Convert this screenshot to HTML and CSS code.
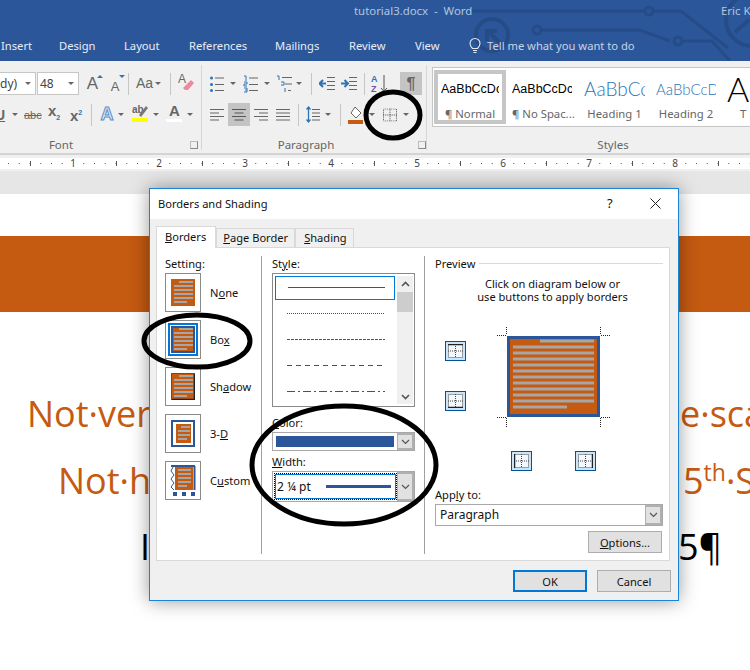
FILE: index.html
```html
<!DOCTYPE html>
<html lang="en">
<head>
  <meta charset="UTF-8">
  <title>Borders and Shading</title>
  <link rel="stylesheet" href="styles.css">
</head>
<body>
<svg class="defs" width="0" height="0">
  <defs>
    <symbol id="page" viewBox="0 0 24 27">
      <rect width="24" height="27" fill="#c55a11"/>
      <path d="M8 3h14M3 7h19M3 11h19M3 15h19M3 19h19M3 23h13" stroke="#a6a6a6" stroke-width="2" fill="none"/>
    </symbol>
    <symbol id="chev" viewBox="0 0 9 6">
      <path d="M1 1l3.5 3.5L8 1" fill="none" stroke="#555" stroke-width="1.2"/>
    </symbol>
    <symbol id="chev-up" viewBox="0 0 9 6">
      <path d="M1 5l3.5-3.5L8 5" fill="none" stroke="#555" stroke-width="1.6"/>
    </symbol>
    <symbol id="grid" viewBox="0 0 15 14">
      <path d="M.5.5h14v13H.5zM7.5 0v14M0 7h15" fill="none" stroke="#444" stroke-dasharray="1 1"/>
    </symbol>
  </defs>
</svg>

<header class="titlebar">
  <svg class="circuit" width="750" height="61" viewBox="0 0 750 61">
    <g fill="none" stroke="#264c87" stroke-width="3">
      <path d="M472 11h173M653 11h28l47 37"/>
      <circle cx="649" cy="11" r="4"/>
      <circle cx="492" cy="35" r="16" stroke-width="4"/>
      <path d="M503 46l-14-14M487 41v-10h10" stroke-width="4"/>
      <path d="M541 30h99l30 11M682 41h30l18 20"/>
      <circle cx="537" cy="30" r="4"/>
      <circle cx="678" cy="41" r="4"/>
      <circle cx="752" cy="20" r="26" stroke-width="4"/>
      <path d="M735 32l14-12" stroke-width="4"/>
    </g>
  </svg>
  <div class="title-row">
    <span class="doc-name">tutorial3.docx &nbsp;-&nbsp; Word</span>
    <span class="user">Eric K</span>
  </div>
  <nav class="tabs">
    <span class="tab tab-insert">Insert</span>
    <span class="tab tab-design">Design</span>
    <span class="tab tab-layout">Layout</span>
    <span class="tab tab-refs">References</span>
    <span class="tab tab-mail">Mailings</span>
    <span class="tab tab-review">Review</span>
    <span class="tab tab-view">View</span>
    <svg class="bulb" width="12" height="17" viewBox="0 0 12 17"><path d="M3.5 11.5C2 10 1 9 1 6.500a5 5 0 0 1 10 0c0 2.500-1 3.500-2.500 5zM4 13.500h4M4.500 15.500h3" fill="none" stroke="#e4eaf3" stroke-width="1.100"/></svg>
    <span class="tell">Tell me what you want to do</span>
  </nav>
</header>

<section class="ribbon">
  <div class="group group-font">
    <div class="row">
      <div class="combo combo-font"><span>dy)</span><i class="drop"></i></div>
      <div class="combo combo-size"><span>48</span><i class="drop"></i></div>
      <span class="ico glyph grow ml-6">A<b class="up"></b></span>
      <span class="ico glyph shrink ml-8">A<b class="down"></b></span>
      <i class="sep ml-6"></i>
      <span class="ico glyph case ml-7">Aa</span><i class="drop ml-4"></i>
      <i class="sep ml-9"></i>
      <span class="ico eraser ml-7">
        <svg width="16" height="20" viewBox="0 0 16 20"><text x="0" y="11" class="svg-a">A</text><path d="M5 16l8-8 3 3-6 7H7z" fill="#ea8a9d"/></svg>
      </span>
    </div>
    <div class="row row-2">
      <span class="ico under">U</span><i class="drop ml-4"></i>
      <span class="ico small-txt strike ml-6">abc</span>
      <span class="ico script ml-8">x<sub>2</sub></span>
      <span class="ico script ml-9">x<sup>2</sup></span>
      <i class="sep ml-8"></i>
      <span class="ico glyph effect ml-8">A</span><i class="drop ml-4"></i>
      <span class="ico high ml-8">
        <svg width="16" height="20" viewBox="0 0 16 20"><text x="0" y="10" class="svg-ab">ab</text><path d="M7 12l7-9 2 2-7 9z" fill="#777"/><rect y="15" width="16" height="4" fill="#ff0"/></svg>
      </span><i class="drop ml-5"></i>
      <span class="ico color ml-7">
        <svg width="16" height="20" viewBox="0 0 16 20"><text x="3" y="13" class="svg-big">A</text><rect y="16" width="16" height="3" fill="#fff"/></svg>
      </span><i class="drop ml-5"></i>
    </div>
    <div class="group-label">Font<i class="launcher launch-font"></i></div>
  </div>

  <div class="group group-para">
    <div class="row">
      <svg class="ico" width="14" height="18" viewBox="0 0 14 18"><path d="M5 3h9M5 9.500h9M5 15.500h9" stroke="#666"/><path d="M1.500 3h.01M1.500 9.500h.01M1.500 15.500h.01" stroke="#2e74b5" stroke-width="3" stroke-linecap="round"/></svg>
      <i class="drop ml-6"></i>
      <svg class="ico ml-7" width="15" height="18" viewBox="0 0 15 18"><path d="M6 3h9M6 9.500h9M6 15.500h9" stroke="#666"/><path d="M1 1h2v5M1 7h3v2H1v2h3M1 13h3v4H1M2 15h2" fill="none" stroke="#2e74b5"/></svg>
      <i class="drop ml-6"></i>
      <svg class="ico ml-6" width="16" height="18" viewBox="0 0 16 18"><path d="M6 2.500h10M9 9h7M12 15.500h3" stroke="#666"/><path d="M1 1h2v4M5 7h3v3H5M9 13v4" fill="none" stroke="#2e74b5"/></svg>
      <i class="drop ml-4"></i>
      <i class="sep ml-9"></i>
      <svg class="ico ml-7" width="16" height="16" viewBox="0 0 16 16"><path d="M8 1.500h8M8 5.500h8M8 9.500h8M8 13.500h8" stroke="#666"/><path d="M7 7.500H1M4 4L.500 7.500 4 11" fill="none" stroke="#2e74b5" stroke-width="2"/></svg>
      <svg class="ico ml-6" width="16" height="16" viewBox="0 0 16 16"><path d="M8 1.500h8M8 5.500h8M8 9.500h8M8 13.500h8" stroke="#666"/><path d="M0 7.500h6M3.500 4L7 7.500 3.500 11" fill="none" stroke="#2e74b5" stroke-width="2"/></svg>
      <i class="sep ml-7"></i>
      <svg class="ico ml-6" width="17" height="19" viewBox="0 0 17 19"><text x="0" y="8" class="svg-sort-a">A</text><text x="0" y="18" class="svg-sort-z">Z</text><path d="M13 1v16M10 14l3 3.500 3-3.500" fill="none" stroke="#555"/></svg>
      <span class="toggle pilcrow ml-12">¶</span>
    </div>
    <div class="row row-2">
      <svg class="ico" width="14" height="12" viewBox="0 0 14 12"><path d="M0 .5h14M0 4h9M0 7.500h14M0 11h9" stroke="#666"/></svg>
      <span class="toggle align-on ml-4"><svg width="14" height="12" viewBox="0 0 14 12"><path d="M0 .5h14M2.500 4h9M0 7.500h14M2.500 11h9" stroke="#555"/></svg></span>
      <svg class="ico ml-4" width="14" height="12" viewBox="0 0 14 12"><path d="M0 .5h14M5 4h9M0 7.500h14M5 11h9" stroke="#666"/></svg>
      <svg class="ico ml-8" width="14" height="12" viewBox="0 0 14 12"><path d="M0 .5h14M0 4h14M0 7.500h14M0 11h14" stroke="#666"/></svg>
      <i class="sep ml-8"></i>
      <svg class="ico ml-7" width="14" height="17" viewBox="0 0 14 17"><path d="M6 3.500h8M6 7h8M6 10.500h8M6 14h8" stroke="#666"/><path d="M2.500 1v15M.5 3.500l2-2.500 2 2.500M.5 13.500l2 2.500 2-2.500" fill="none" stroke="#2e74b5" stroke-width="1.300"/></svg>
      <i class="drop ml-5"></i>
      <i class="sep ml-9"></i>
      <svg class="ico ml-7" width="15" height="18" viewBox="0 0 15 18"><path d="M7 1l6 6-5 5-5-5z" fill="#fff" stroke="#666"/><rect y="14" width="15" height="4" fill="#c55a11"/></svg>
      <i class="drop ml-6"></i>
      <svg class="ico ml-8" width="14" height="14" viewBox="0 0 15 14"><use href="#grid"/></svg>
      <i class="drop ml-6"></i>
    </div>
    <div class="group-label">Paragraph<i class="launcher launch-para"></i></div>
  </div>

  <div class="group group-styles">
    <div class="gallery">
      <div class="style style-on"><div class="sample sample-body">AaBbCcDc</div><div class="style-name">¶ Normal</div></div>
      <div class="style style-nospace"><div class="sample sample-body">AaBbCcDc</div><div class="style-name">¶ No Spac...</div></div>
      <div class="style style-h1"><div class="sample sample-h1">AaBbCc</div><div class="style-name">Heading 1</div></div>
      <div class="style style-h2"><div class="sample sample-h2">AaBbCcD</div><div class="style-name">Heading 2</div></div>
      <div class="style style-title"><div class="sample sample-title">A</div><div class="style-name">T</div></div>
    </div>
    <div class="group-label">Styles</div>
  </div>
</section>

<div class="ruler-zone">
  <div class="ruler">
    <span class="num"><span>1</span></span><span class="num"><span>2</span></span><span class="num"><span>3</span></span><span class="num"><span>4</span></span>
    <span class="num"><span>5</span></span><span class="num"><span>6</span></span><span class="num"><span>7</span></span><span class="num"><span>8</span></span>
  </div>
</div>

<main class="doc">
  <div class="band"></div>
  <div class="doc-lines">
    <div class="doc-line orange line-a"><span class="head head-a">Not·ver</span><span>e·sca</span></div>
    <div class="doc-line orange line-b"><span class="head head-b">Not·h</span><span>5<sup>th</sup>·S</span></div>
    <div class="doc-line line-c"><span class="head head-c">I</span><span>5¶</span></div>
  </div>
</main>

<!-- the dialog floats over the document -->
<div class="dialog">
  <div class="dlg-title">
    <span class="dlg-name">Borders and Shading</span>
    <span class="help">?</span>
    <svg class="close" width="11" height="11" viewBox="0 0 11 11"><path d="M.5.5l10 10M10.500.5l-10 10" stroke="#222"/></svg>
  </div>
  <div class="dlg-body">
    <div class="dlg-tabs">
      <span class="dlg-tab dlg-tab-on"><u>B</u>orders</span>
      <span class="dlg-tab"><u>P</u>age Border</span>
      <span class="dlg-tab dlg-tab-last"><u>S</u>hading</span>
    </div>
    <div class="panel">
      <div class="col col-setting">
        <div class="col-label">Setting:</div>
        <div class="setting">
          <div class="thumb"><svg width="24" height="27"><use href="#page"/></svg></div>
          <span>N<u>o</u>ne</span>
        </div>
        <div class="setting">
          <div class="thumb thumb-on"><svg width="24" height="27" viewBox="0 0 24 27"><use href="#page"/><rect x="1" y="1" width="22" height="25" fill="none" stroke="#2b579a" stroke-width="2"/></svg></div>
          <span>Bo<u>x</u></span>
        </div>
        <div class="setting">
          <div class="thumb"><svg width="24" height="27" viewBox="0 0 24 27"><use href="#page"/><path d="M.5 26.500v-26h23v26z" fill="none" stroke="#2b579a"/><path d="M1 26.500h23M23.500 1v26" stroke="#222" stroke-width="1.500"/></svg></div>
          <span>Sh<u>a</u>dow</span>
        </div>
        <div class="setting">
          <div class="thumb"><svg width="24" height="27" viewBox="0 0 24 27"><rect x="1" y="1" width="22" height="25" fill="#fff" stroke="#2b579a" stroke-width="2"/><rect x="5" y="4" width="15" height="19" fill="#c55a11"/><path d="M10 7h9M7 11h12M7 15h12M7 19h9" stroke="#a6a6a6" stroke-width="2"/></svg></div>
          <span>3-<u>D</u></span>
        </div>
        <div class="setting">
          <div class="thumb"><svg width="26" height="31" viewBox="0 0 26 31"><rect x="5" y="2" width="18" height="23" fill="#c55a11"/><path d="M8 5h13M8 9h13M8 13h13M8 17h13M8 21h9" stroke="#a6a6a6" stroke-width="2"/><path d="M1 1h24M24.500 1v24" stroke="#2b579a" stroke-width="2"/><path d="M3 2l-2 4 3 4-3 4 3 4-3 4 3 3" fill="none" stroke="#2b579a"/><path d="M3 27h4v4H3zM12 27h4v4h-4zM21 27h4v4h-4z" fill="#2b579a"/></svg></div>
          <span>C<u>u</u>stom</span>
        </div>
      </div>

      <div class="col col-style">
        <div class="col-label">St<u>y</u>le:</div>
        <div class="stylelist">
          <div class="lines">
            <div class="line-item line-on"><i class="rule rule-solid"></i></div>
            <div class="line-item"><i class="rule rule-dot"></i></div>
            <div class="line-item"><i class="rule rule-fine"></i></div>
            <div class="line-item"><i class="rule rule-dash"></i></div>
            <div class="line-item"><i class="rule rule-dashdot"></i></div>
          </div>
          <div class="scrollbar">
            <svg width="9" height="6"><use href="#chev-up"/></svg>
            <div class="scroll-thumb"></div>
            <svg class="scroll-down" width="9" height="6" viewBox="0 0 9 6"><path d="M1 1l3.500 3.500L8 1" fill="none" stroke="#555" stroke-width="1.600"/></svg>
          </div>
        </div>
        <div class="col-label label-color"><u>C</u>olor:</div>
        <div class="select select-color">
          <div class="select-value"><i class="swatch"></i></div>
          <div class="select-btn"><svg width="9" height="6"><use href="#chev"/></svg></div>
        </div>
        <div class="col-label label-width"><u>W</u>idth:</div>
        <div class="select select-width">
          <div class="select-value width-value"><span>2 ¼ pt</span><i class="width-line"></i></div>
          <div class="select-btn"><svg width="9" height="6"><use href="#chev"/></svg></div>
        </div>
      </div>

      <div class="col col-preview">
        <div class="preview-head"><span>Preview</span><i class="preview-rule"></i></div>
        <p class="hint">Click on diagram below or<br>use buttons to apply borders</p>
        <div class="diagram">
          <div class="side-btns">
            <div class="edge"><svg width="15" height="14"><use href="#grid"/><path d="M0 .5h15" stroke="#222" stroke-width="1.500"/></svg></div>
            <div class="edge"><svg width="15" height="14"><use href="#grid"/><path d="M0 13.500h15" stroke="#222" stroke-width="1.500"/></svg></div>
          </div>
          <div class="sheet-wrap">
            <svg width="113" height="100" viewBox="0 0 113 100">
              <path d="M9.500 0v8M103.500 0v8M9.500 91v9M103.500 91v9M0 8.500h9M104 8.500h9M0 90.500h9M104 90.500h9" stroke="#222" stroke-dasharray="1 1" fill="none"/>
              <rect x="11.500" y="10.500" width="90" height="78" fill="#c55a11" stroke="#2b579a" stroke-width="3"/>
              <path d="M43 14h54M16 20h81M16 26h81M16 32h81M16 38h81M16 44h81M16 50h81M16 56h81M16 62h81M16 68h81M16 74h81M16 80h54" stroke="#a6a6a6" stroke-width="3"/>
            </svg>
          </div>
        </div>
        <div class="bottom-btns">
          <div class="edge"><svg width="15" height="14"><use href="#grid"/><path d="M.5 0v14" stroke="#222" stroke-width="1.500"/></svg></div>
          <div class="edge"><svg width="15" height="14"><use href="#grid"/><path d="M14.500 0v14" stroke="#222" stroke-width="1.500"/></svg></div>
        </div>
        <div class="col-label label-apply">App<u>l</u>y to:</div>
        <div class="select select-apply">
          <div class="select-value apply-value">Paragraph</div>
          <div class="select-btn"><svg width="9" height="6"><use href="#chev"/></svg></div>
        </div>
        <div class="options-row"><button class="btn btn-options"><u>O</u>ptions...</button></div>
      </div>
    </div>
    <div class="dlg-actions">
      <button class="btn btn-ok">OK</button>
      <button class="btn">Cancel</button>
    </div>
  </div>
</div>

<!-- hand drawn marks on the screenshot -->
<svg class="marks" width="750" height="670" viewBox="0 0 750 670">
  <g fill="none" stroke="#000" stroke-width="5">
    <ellipse cx="393" cy="115" rx="27" ry="23"/>
    <ellipse cx="197" cy="341" rx="53" ry="26"/>
    <ellipse cx="344" cy="465" rx="92" ry="59"/>
  </g>
</svg>
</body>
</html>
```

FILE: styles.css
```css
body {
  margin: 0;
  width: 750px;
  height: 670px;
  overflow: hidden;
  position: relative;
  font-family: "Noto Sans", "Open Sans", sans-serif;
  background: #fff;
}
u { text-underline-offset: 1px; }
.defs { position: absolute; }

/* title bar */
.titlebar {
  height: 61px;
  background: #2b579a;
  position: relative;
  overflow: hidden;
}
.circuit { position: absolute; left: 0; top: 0; }
.title-row {
  position: relative;
  height: 37px;
  font-size: 11.4px;
  color: #b4c5df;
  line-height: 22px;
}
.doc-name { position: absolute; left: 354px; }
.user { position: absolute; left: 721px; white-space: nowrap; }
.tabs {
  position: relative;
  display: flex;
  align-items: center;
  height: 17px;
  font-size: 11.2px;
  color: #e8edf5;
  white-space: nowrap;
}
.tab-insert { margin-left: 1px; width: 58px; }
.tab-design { width: 65px; }
.tab-layout { width: 65px; }
.tab-refs { width: 86px; }
.tab-mail { width: 74px; }
.tab-review { width: 66px; }
.tab-view { width: 54px; }
.bulb { margin-right: 6px; }
.tell { color: #c7d4e7; }

/* ribbon */
.ribbon {
  height: 92px;
  display: flex;
  background: #f0f0f0;
  font-family: "Liberation Sans", sans-serif;
  color: #666;
}
.group { position: relative; box-sizing: border-box; padding-top: 11px; }
.group-font { width: 202px; border-right: 1px solid #d6d6d6; }
.group-para { width: 225px; padding-left: 8px; border-right: 1px solid #d6d6d6; }
.group-styles { flex: 1; padding-top: 6px; padding-left: 5px; overflow: hidden; }
.group-font, .group-para { height: 85px; margin-top: 4px; padding-top: 7px; }
.row { display: flex; align-items: center; height: 23px; }
.row-2 { margin-top: 8px; }
.group-label {
  position: absolute;
  left: 0;
  right: 0;
  top: 72px;
  text-align: center;
  font: 11.5px "Noto Sans", sans-serif;
  color: #666;
}
.group-font .group-label { right: 79px; }
.group-para .group-label { right: 16px; }
.group-styles .group-label { top: 76px; left: 0; right: -49px; }
.launcher {
  position: absolute;
  top: 4px;
  width: 6px;
  height: 6px;
  border: 1px solid #888;
  border-top-color: #bbb;
  border-left-color: #bbb;
}
.launch-font { left: 190px; }
.launch-para { left: 216px; }
.ico { flex: none; display: block; }
.drop {
  flex: none;
  width: 0;
  height: 0;
  border: 3px solid transparent;
  border-top: 3px solid #666;
  border-bottom: 0;
}
.sep { flex: none; width: 1px; height: 22px; background: #c6c6c6; }
.ml-4 { margin-left: 4px; }
.ml-5 { margin-left: 5px; }
.ml-6 { margin-left: 6px; }
.ml-7 { margin-left: 7px; }
.ml-8 { margin-left: 8px; }
.ml-9 { margin-left: 9px; }
.ml-12 { margin-left: 12px; }

.combo {
  box-sizing: border-box;
  height: 23px;
  flex: none;
  display: flex;
  align-items: center;
  justify-content: space-between;
  padding-right: 4px;
  background: #fff;
  border: 1px solid #c6c6c6;
  font: 12px "Noto Sans", sans-serif;
  color: #444;
}
.combo-font { width: 36px; border-left: 0; }
.combo-size { width: 42px; margin-left: 1px; padding-left: 2px; }
.glyph { position: relative; line-height: 23px; text-align: center; }
.grow { width: 15px; font-size: 17px; }
.shrink { width: 14px; font-size: 13px; padding-top: 3px; height: 20px; }
.case { width: 15px; font-size: 14px; }
.up, .down {
  position: absolute;
  right: -3px;
  top: 3px;
  width: 0;
  height: 0;
  border: 3px solid transparent;
}
.up { border-bottom: 3px solid #2e74b5; border-top: 0; }
.down { border-top: 3px solid #2e74b5; border-bottom: 0; }
.under {
  width: 8px;
  overflow: hidden;
  text-indent: -5px;
  font-size: 14px;
  font-weight: bold;
  text-decoration: underline;
}
.small-txt { width: 16px; font-size: 11px; }
.strike { text-decoration: line-through; }
.script { width: 13px; font-size: 15px; font-weight: bold; line-height: 20px; }
.script sub, .script sup { font-size: 7px; color: #2e74b5; }
.effect {
  width: 14px;
  font-size: 18px;
  font-weight: bold;
  color: #dbe7f5;
  -webkit-text-stroke: 1px #5b8ec9;
}
.svg-a { font: 12px "Liberation Sans", sans-serif; fill: #666; }
.svg-ab { font: bold 10px "Liberation Sans", sans-serif; fill: #666; }
.svg-big { font: bold 15px "Liberation Sans", sans-serif; fill: #666; }
.svg-sort-a { font: bold 9px "Liberation Sans", sans-serif; fill: #2e74b5; }
.svg-sort-z { font: bold 9px "Liberation Sans", sans-serif; fill: #7b4ea3; }
.toggle {
  flex: none;
  width: 22px;
  height: 23px;
  display: flex;
  align-items: center;
  justify-content: center;
  background: #c4c4c4;
}
.pilcrow { font-size: 16px; font-weight: bold; color: #666; }

/* styles gallery */
.gallery {
  display: flex;
  box-sizing: border-box;
  width: 330px;
  height: 60px;
  padding: 2px 0 2px 1px;
  background: #fff;
  border: 1px solid #c6c6c6;
  border-right: 0;
}
.style {
  box-sizing: border-box;
  flex: none;
  height: 54px;
  overflow: hidden;
  text-align: center;
}
.style-on { width: 72px; padding: 0 3px; border: 4px solid #c6c6c6; }
.style-nospace { width: 72px; padding: 4px 6px 0; }
.style-h1 { width: 72px; padding: 4px 5px 0 6px; }
.style-h2 { width: 72px; padding: 4px 6px 0; }
.style-title { width: 72px; padding: 4px 0 0 5px; text-align: left; }
.sample {
  height: 30px;
  line-height: 30px;
  overflow: hidden;
  white-space: nowrap;
  text-align: left;
}
.sample-body { font: 12.5px/30px "Liberation Sans", sans-serif; color: #000; }
.sample-h1 { font: 300 19px/30px Lato, sans-serif; color: #2e74b5; }
.sample-h2 { font: 300 15px/30px Lato, sans-serif; color: #2e74b5; }
.sample-title { font: 300 34px/30px Lato, sans-serif; color: #000; }
.style-name {
  font: 11.3px/20px "Noto Sans", sans-serif;
  color: #666;
  white-space: nowrap;
}
.style-title .style-name { margin-left: 13px; }

/* ruler */
.ruler-zone {
  box-sizing: border-box;
  height: 41px;
  padding-top: 3px;
  background: linear-gradient(#f0f0f0 16px, #e6e6e6 16px);
  border-top: 2px solid #d4d4d4;
}
.ruler {
  height: 11px;
  display: flex;
  padding-left: 30px;
  background-color: #fff;
  background-image:
    linear-gradient(to right, #555 1px, transparent 1px),
    linear-gradient(to right, #555 1px, transparent 1px);
  background-size: 86px 5px, 10.75px 1px;
  background-repeat: repeat-x, repeat-x;
  background-position: 30px 3px, 8px 5px;
}
.num {
  width: 86px;
  flex: none;
  font: 10px/11px "Noto Sans", sans-serif;
  color: #444;
  text-align: center;
}
.num span { display: inline-block; padding: 0 1px; background: #fff; }

/* document */
.doc { height: 476px; padding-top: 42px; box-sizing: border-box; overflow: hidden; }
.band { height: 76px; background: #c55a11; }
.doc-lines { margin-top: 69px; }
.doc-line {
  display: flex;
  height: 66.5px;
  font: 36px/66px "Open Sans", sans-serif;
  white-space: nowrap;
  color: #000;
}
.doc-line sup { font-size: 23px; line-height: 0; }
.orange { color: #c55a11; }
.line-a { padding-left: 27px; }
.line-b { padding-left: 58px; }
.line-c { padding-left: 140px; }
.head { flex: none; }
.head-a { width: 653px; }
.head-b { width: 625px; }
.head-c { width: 538px; }

/* dialog */
.dialog {
  position: absolute;
  left: 149px;
  top: 188px;
  box-sizing: border-box;
  width: 530px;
  height: 413px;
  background: #f0f0f0;
  border: 1px solid #1883d7;
  box-shadow: 0 0 18px rgba(0, 0, 0, .4);
  font-size: 11.1px;
  color: #111;
  display: flex;
  flex-direction: column;
}
.dlg-title {
  box-sizing: border-box;
  height: 30px;
  flex: none;
  display: flex;
  align-items: center;
  padding: 0 0 2px 8px;
  background: #fff;
}
.dlg-name { width: 113px; }
.help { margin-left: 336px; font-size: 13px; }
.close { margin-left: 37px; }
.dlg-body { flex: 1; padding: 7px 8px 0 6px; }
.dlg-tabs { display: flex; height: 21px; align-items: flex-end; }
.dlg-tab {
  box-sizing: border-box;
  height: 19px;
  line-height: 17px;
  padding: 0 6px;
  border: 1px solid #d9d9d9;
  border-bottom: 0;
  white-space: nowrap;
}
.dlg-tab-on {
  height: 22px;
  line-height: 20px;
  padding: 0 9px 0 8px;
  background: #fff;
  position: relative;
  top: 1px;
}
.dlg-tab-last { padding-left: 8px; }
.panel {
  box-sizing: border-box;
  height: 314px;
  display: flex;
  padding-top: 8px;
  background: #fff;
  border: 1px solid #d9d9d9;
}
.col { box-sizing: border-box; flex: none; }
.col-label { height: 17px; line-height: 15px; }
.col-setting {
  width: 105px;
  height: 298px;
  padding-left: 8px;
  border-right: 1px solid #a0a0a0;
}
.setting {
  display: flex;
  align-items: center;
  gap: 9px;
  height: 39px;
  margin-bottom: 8px;
}
.thumb {
  box-sizing: border-box;
  width: 36px;
  height: 39px;
  display: flex;
  align-items: center;
  justify-content: center;
  border: 1px solid #8a8a8a;
}
.thumb-on svg { outline: 2px solid #0078d7; outline-offset: 1px; }

.col-style {
  width: 163px;
  height: 298px;
  padding-left: 10px;
  border-right: 1px solid #a0a0a0;
}
.stylelist {
  box-sizing: border-box;
  width: 143px;
  height: 134px;
  display: flex;
  padding: 2px 1px 2px 2px;
  border: 1px solid #8a8a8a;
}
.lines { flex: 1; }
.line-item {
  box-sizing: border-box;
  height: 26px;
  display: flex;
  align-items: center;
  padding: 0 9px 0 12px;
  width: 120px;
}
.line-on { height: 24px; padding-bottom: 2px; border: 1px solid #0078d7; }
.rule { display: block; width: 98px; height: 1px; }
.rule-solid { background: #2b579a; }
.rule-dot { background: repeating-linear-gradient(to right, #2b579a 0 1px, transparent 1px 2px); }
.rule-fine { background: repeating-linear-gradient(to right, #2b579a 0 3px, transparent 3px 4px); }
.rule-dash { background: repeating-linear-gradient(to right, #2b579a 0 5px, transparent 5px 9px); }
.rule-dashdot { background: repeating-linear-gradient(to right, #2b579a 0 8px, transparent 8px 11px, #2b579a 11px 13px, transparent 13px 16px); }
.scrollbar {
  width: 16px;
  display: flex;
  flex-direction: column;
  align-items: center;
  background: #f0f0f0;
  padding-top: 5px;
}
.scroll-thumb { width: 16px; height: 20px; margin-top: 5px; background: #cdcdcd; }
.scroll-down { margin-top: auto; margin-bottom: 4px; }
.label-color { margin-top: 8px; height: 17px; }
.label-width { margin-top: 3px; height: 17px; }
.select {
  box-sizing: border-box;
  display: flex;
  width: 143px;
  background: #fff;
  border: 1px solid #a8a8a8;
}
.select-value { flex: 1; min-width: 0; }
.select-btn {
  box-sizing: border-box;
  flex: none;
  width: 17px;
  display: flex;
  align-items: center;
  justify-content: center;
  background: #e1e1e1;
  border: 2px solid #b0b0b0;
  border-left-width: 1px;
}
.select-color { height: 19px; }
.select-color .select-value { padding: 3px; display: flex; }
.swatch { flex: 1; background: #2b579a; }
.select-width { height: 31px; }
.width-value {
  display: flex;
  align-items: center;
  margin: 2px 1px 2px 2px;
  padding-left: 2px;
  outline: 1px dotted #000;
  box-shadow: inset 0 0 0 1px #0078d7;
  font-size: 12px;
}
.width-line { width: 65px; height: 3px; margin-left: 15px; background: #2b579a; }

.col-preview { width: 238px; padding-left: 10px; }
.preview-head { display: flex; align-items: center; gap: 4px; height: 14px; margin-bottom: 2px; }
.preview-rule { width: 186px; height: 1px; background: #d9d9d9; }
.hint { margin: 7px 0 0; text-align: center; line-height: 13px; width: 235px; }
.diagram { display: flex; margin-top: 24px; padding-left: 10px; height: 100px; }
.side-btns { display: flex; flex-direction: column; gap: 30px; padding-top: 14px; }
.sheet-wrap { margin-left: 31px; }
.edge {
  box-sizing: border-box;
  width: 21px;
  height: 20px;
  flex: none;
  display: flex;
  align-items: center;
  justify-content: center;
  background: #cce4f7;
  border: 1px solid #005499;
}
.edge svg { background: #f2f8fd; }
.bottom-btns { display: flex; gap: 43px; padding-left: 76px; margin-top: 24px; }
.label-apply { margin-top: 17px; height: 16px; line-height: 14px; }
.select-apply { width: 228px; height: 22px; }
.apply-value { padding-left: 4px; line-height: 20px; font-size: 12px; }
.options-row { display: flex; justify-content: flex-end; width: 227px; margin-top: 5px; }

.btn {
  box-sizing: border-box;
  width: 74px;
  height: 22px;
  padding: 0;
  background: #e1e1e1;
  border: 1px solid #adadad;
  font: 11.1px "Noto Sans", sans-serif;
  color: #111;
}
.btn-ok { border: 2px solid #0078d7; }
.dlg-actions {
  display: flex;
  justify-content: flex-end;
  gap: 10px;
  padding-top: 9px;
  margin-right: -1px;
}

/* annotations */
.marks { position: absolute; left: 0; top: 0; pointer-events: none; }
```
